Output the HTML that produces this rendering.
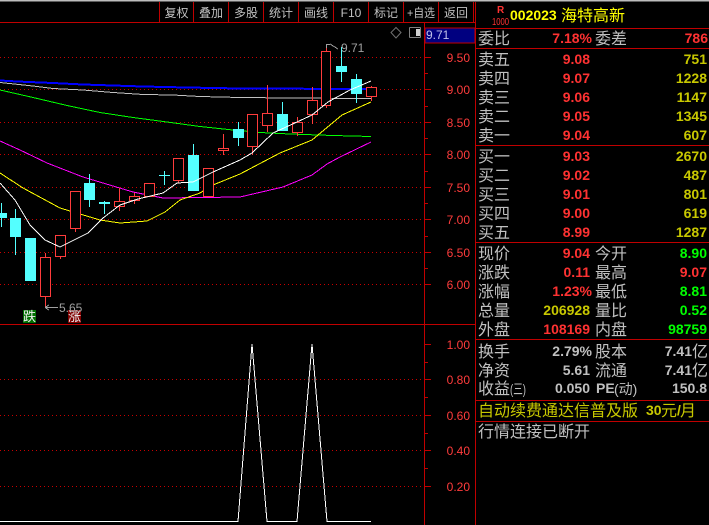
<!DOCTYPE html>
<html><head><meta charset="utf-8"><style>
html,body{margin:0;padding:0;background:#000;width:709px;height:525px;overflow:hidden}
svg{display:block;position:absolute;left:0;top:0}
text{font-family:"Liberation Sans","WenQuanYi Zen Hei","Noto Sans CJK SC",sans-serif}
.tb{font-size:12px;fill:#c0c0c0;text-anchor:middle}
.ax{font-size:12px;fill:#ff3c3c;text-anchor:end}
.l{font-size:16px;fill:#c0c0c0}
.n{font-size:14px;font-weight:bold;text-anchor:end}
.r{fill:#ff3232}.y{fill:#c8c800}.g{fill:#00ff00}.w{fill:#c0c0c0}
.dot{stroke:#c80000;stroke-width:1;stroke-dasharray:1 3;fill:none}
.ln{stroke:#c00000;stroke-width:1;fill:none}
.up{fill:#000;stroke:#ff3c3c;stroke-width:1}
.ur{stroke:#ff3c3c;stroke-width:1}
.dn{fill:#54ffff}
.dw{stroke:#54ffff;stroke-width:1}
.ma{fill:none;stroke-width:1}
</style></head><body>
<svg width="709" height="525" viewBox="0 0 709 525" shape-rendering="crispEdges">
<rect x="0" y="0" width="709" height="1.5" fill="#bdbdbd"/>
<g class="ln">
<path d="M0 22.5H475M0 324.5H475M424.5 22V525M475.5 2V525M475 28.5H709M475 48.5H709M475 145.5H709M475 242.5H709M475 339.5H709M475 400.5H709M475 421.5H709"/>
<path d="M159.5 2V22M193.5 2V22M228.5 2V22M263.5 2V22M298.5 2V22M333.5 2V22M368.5 2V22M403.5 2V22M438.5 2V22M473.5 2V22"/>
</g>
<path class="dot" d="M0 57.5H424M0 89.5H424M0 122.5H424M0 154.5H424M0 187.5H424M0 219.5H424M0 252.5H424M0 284.5H424M0 379.5H424M0 415.5H424M0 450.5H424M0 486.5H424"/>
<path class="ln" d="M425 57.5H431M425 89.5H431M425 122.5H431M425 154.5H431M425 187.5H431M425 219.5H431M425 252.5H431M425 284.5H431M425 73.5H428M425 106.5H428M425 138.5H428M425 171.5H428M425 203.5H428M425 236.5H428M425 268.5H428M425 344.5H431M425 379.5H431M425 415.5H431M425 450.5H431M425 486.5H431M425 362.5H428M425 397.5H428M425 433.5H428M425 468.5H428"/>
<rect x="425" y="28" width="50" height="15" fill="#000080" stroke="#c00000"/>
<polyline class="ma" stroke="#0000ff" style="stroke-width:2" points="0,80.5 17,81.5 53,83 83,84.5 113,85.5 143,86.5 187,87.5 240,88.5 367,89"/>
<polyline class="ma" stroke="#c0c0c0" points="0,82.5 33,86 53,88.5 83,90 113,92.5 143,94.5 173,95 200,96.5 240,97.5 290,98 371,98.5"/>
<polyline class="ma" stroke="#00ff00" points="0,90 33,97.5 67,105.5 100,112.5 133,117.5 167,122 200,126.5 233,130 260,132.5 290,134 333,135.5 371,136.5"/>
<polyline class="ma" stroke="#ff00ff" points="0,141 20,150 47,163 83,177 133,192 163,198 240,197 283,187 312,175 327,164 340,157 371,142"/>
<polyline class="ma" stroke="#ffff00" points="0,173 23,188 60,208 100,220 120,223 147,221 165,212 180,200 200,193 213,185 240,174 280,153 312,140 330,125 342,115 371,102"/>
<g>
<path class="dw" d="M1.5 203V227M15.5 209V255M89.5 174V207M104.5 201V214M164.5 171V185M193.5 144V191M238.5 122V146M282.5 102V131M341.5 47V82M356.5 74V103"/>
<rect class="dn" x="0" y="213" width="7" height="5"/>
<rect class="dn" x="10" y="218" width="11" height="19"/>
<rect class="dn" x="25" y="238" width="11" height="43"/>
<rect class="dn" x="84" y="183" width="11" height="17"/>
<rect class="dn" x="99" y="202" width="11" height="2"/>
<rect class="dn" x="159" y="175" width="11" height="1"/>
<rect class="dn" x="188" y="155" width="11" height="36"/>
<rect class="dn" x="233" y="129" width="11" height="9"/>
<rect class="dn" x="277" y="114" width="11" height="17"/>
<rect class="dn" x="336" y="66" width="11" height="6"/>
<rect class="dn" x="351" y="79" width="11" height="15"/>
<path class="ur" d="M45.5 253V307M60.5 257V259M75.5 229V232M119.5 188V211M134.5 193V204M178.5 181V183M223.5 134V155M252.5 147V155M267.5 85V132M297.5 117V136M312.5 87V124M326.5 45V108M371.5 86V101"/>
<rect class="up" x="40.5" y="257.5" width="10" height="39"/>
<rect class="up" x="55.5" y="235.5" width="10" height="21"/>
<rect class="up" x="70.5" y="191.5" width="10" height="37"/>
<rect class="up" x="114.5" y="201.5" width="10" height="5"/>
<rect class="up" x="129.5" y="196.5" width="10" height="4"/>
<rect class="up" x="144.5" y="183.5" width="10" height="13"/>
<rect class="up" x="173.5" y="158.5" width="10" height="22"/>
<rect class="up" x="203.5" y="168.5" width="10" height="28"/>
<rect class="up" x="218.5" y="148.5" width="10" height="2"/>
<rect class="up" x="247.5" y="114.5" width="10" height="32"/>
<rect class="up" x="262.5" y="113.5" width="10" height="12"/>
<rect class="up" x="292.5" y="122.5" width="10" height="10"/>
<rect class="up" x="307.5" y="100.5" width="10" height="14"/>
<rect class="up" x="321.5" y="51.5" width="9" height="54"/>
<rect class="up" x="366.5" y="87.5" width="10" height="9"/>
</g>
<polyline class="ma" stroke="#ffffff" points="0,183 15,200 30,225 45,240 60,247 88,233 103,218 120,205 138,199 163,193 177,183 193,182 213,172 240,160 252,153 273,133 297,122 312,115 328,102 350,90 371,81"/>
<polyline class="ma" stroke="#ffffff" points="0,521.5 238,521.5 252,344 267,521.5 297,521.5 312,344 327,521.5 371,521.5"/>
<path d="M45 307.5H58M45 307.5L49 305M45 307.5L49 310" stroke="#a0a0a0" fill="none"/>
<path d="M326.5 44V48M326.5 44.500H330M330 44L338 49" stroke="#a0a0a0" fill="none"/>
<path d="M396 27.500L401 32.500L396 38L391 32.500Z" fill="none" stroke="#707070" shape-rendering="auto"/>
<rect x="409.500" y="27.500" width="11" height="10" fill="#000" stroke="#808080" rx="1"/>
<rect x="416" y="29" width="4" height="7" fill="#d0d0d0"/>
<rect x="23" y="310" width="13" height="13" fill="#007000"/>
<rect x="68" y="310" width="13" height="13" fill="#800000"/>
<g shape-rendering="auto">
<text x="23" y="321" font-size="13" fill="#f0f0f0">跌</text>
<text x="68" y="321" font-size="13" fill="#f0f0f0">涨</text>
<text x="59" y="312" font-size="12" fill="#a0a0a0">5.65</text>
<text x="341" y="52" font-size="12" fill="#a0a0a0">9.71</text>
<text x="426" y="39" font-size="12" fill="#c0c0e8">9.71</text>

<text class="tb" x="176.500" y="17">复权</text>
<text class="tb" x="211" y="17">叠加</text>
<text class="tb" x="246" y="17">多股</text>
<text class="tb" x="281" y="17">统计</text>
<text class="tb" x="316" y="17">画线</text>
<text class="tb" x="351" y="17">F10</text>
<text class="tb" x="386" y="17">标记</text>
<text x="407" y="17" font-size="12" fill="#c0c0c0" textLength="28" lengthAdjust="spacingAndGlyphs">+自选</text>
<text class="tb" x="456" y="17">返回</text>

<text class="ax" x="470" y="62">9.50</text>
<text class="ax" x="470" y="94">9.00</text>
<text class="ax" x="470" y="127">8.50</text>
<text class="ax" x="470" y="159">8.00</text>
<text class="ax" x="470" y="192">7.50</text>
<text class="ax" x="470" y="224">7.00</text>
<text class="ax" x="470" y="257">6.50</text>
<text class="ax" x="470" y="289">6.00</text>
<text class="ax" x="470" y="349">1.00</text>
<text class="ax" x="470" y="384">0.80</text>
<text class="ax" x="470" y="420">0.60</text>
<text class="ax" x="470" y="455">0.40</text>
<text class="ax" x="470" y="491">0.20</text>

<text x="497" y="13" font-size="10" font-weight="bold" fill="#ff3232">R</text>
<text x="492" y="25" font-size="10" fill="#ff3232" textLength="17" lengthAdjust="spacingAndGlyphs">1000</text>
<text x="510" y="20" font-size="14" font-weight="bold" fill="#ffff00">002023</text>
<text x="561" y="21" font-size="16" fill="#ffff00">海特高新</text>

<text class="l" x="478" y="44">委比</text><text class="n r" x="592" y="43">7.18%</text><text class="l" x="595" y="44">委差</text><text class="n r" x="708" y="43">786</text>

<text class="l" x="478" y="65">卖五</text><text class="n r" x="590" y="64">9.08</text><text class="n y" x="707" y="64">751</text>
<text class="l" x="478" y="84">卖四</text><text class="n r" x="590" y="83">9.07</text><text class="n y" x="707" y="83">1228</text>
<text class="l" x="478" y="103">卖三</text><text class="n r" x="590" y="102">9.06</text><text class="n y" x="707" y="102">1147</text>
<text class="l" x="478" y="122">卖二</text><text class="n r" x="590" y="121">9.05</text><text class="n y" x="707" y="121">1345</text>
<text class="l" x="478" y="141">卖一</text><text class="n r" x="590" y="140">9.04</text><text class="n y" x="707" y="140">607</text>

<text class="l" x="478" y="162">买一</text><text class="n r" x="590" y="161">9.03</text><text class="n y" x="707" y="161">2670</text>
<text class="l" x="478" y="181">买二</text><text class="n r" x="590" y="180">9.02</text><text class="n y" x="707" y="180">487</text>
<text class="l" x="478" y="200">买三</text><text class="n r" x="590" y="199">9.01</text><text class="n y" x="707" y="199">801</text>
<text class="l" x="478" y="219">买四</text><text class="n r" x="590" y="218">9.00</text><text class="n y" x="707" y="218">619</text>
<text class="l" x="478" y="238">买五</text><text class="n r" x="590" y="237">8.99</text><text class="n y" x="707" y="237">1287</text>

<text class="l" x="478" y="259">现价</text><text class="n r" x="590" y="258">9.04</text><text class="l" x="595" y="259">今开</text><text class="n g" x="707" y="258">8.90</text>
<text class="l" x="478" y="278">涨跌</text><text class="n r" x="590" y="277">0.11</text><text class="l" x="595" y="278">最高</text><text class="n r" x="707" y="277">9.07</text>
<text class="l" x="478" y="297">涨幅</text><text class="n r" x="592" y="296">1.23%</text><text class="l" x="595" y="297">最低</text><text class="n g" x="707" y="296">8.81</text>
<text class="l" x="478" y="316">总量</text><text class="n y" x="590" y="315">206928</text><text class="l" x="595" y="316">量比</text><text class="n g" x="707" y="315">0.52</text>
<text class="l" x="478" y="335">外盘</text><text class="n r" x="590" y="334">108169</text><text class="l" x="595" y="335">内盘</text><text class="n g" x="707" y="334">98759</text>

<text class="l" x="478" y="357">换手</text><text class="n w" x="592" y="356">2.79%</text><text class="l" x="595" y="357">股本</text><text class="n w" x="692" y="356">7.41</text><text class="l" x="692" y="357">亿</text>
<text class="l" x="478" y="376">净资</text><text class="n w" x="590" y="375">5.61</text><text class="l" x="595" y="376">流通</text><text class="n w" x="692" y="375">7.41</text><text class="l" x="692" y="376">亿</text>
<text class="l" x="478" y="394">收益</text><text x="510" y="394" font-size="14" fill="#c0c0c0" textLength="16" lengthAdjust="spacingAndGlyphs">(三)</text><text class="n w" x="590" y="393">0.050</text><text x="596" y="393" font-size="14" font-weight="bold" fill="#c0c0c0">PE</text><text x="614" y="394" font-size="14" fill="#c0c0c0">(动)</text><text class="n w" x="707" y="393">150.8</text>

<text x="478" y="416" font-size="16" fill="#c8c800">自动续费通达信普及版</text>
<text x="646" y="415" font-size="14" font-weight="bold" fill="#c8c800">30</text><text x="661" y="416" font-size="16" fill="#c8c800">元</text><text x="677" y="415" font-size="14" font-weight="bold" fill="#c8c800">/</text><text x="680" y="416" font-size="16" fill="#c8c800">月</text>
<text class="l" x="478" y="437">行情连接已断开</text>
</g>
</svg>
</body></html>
